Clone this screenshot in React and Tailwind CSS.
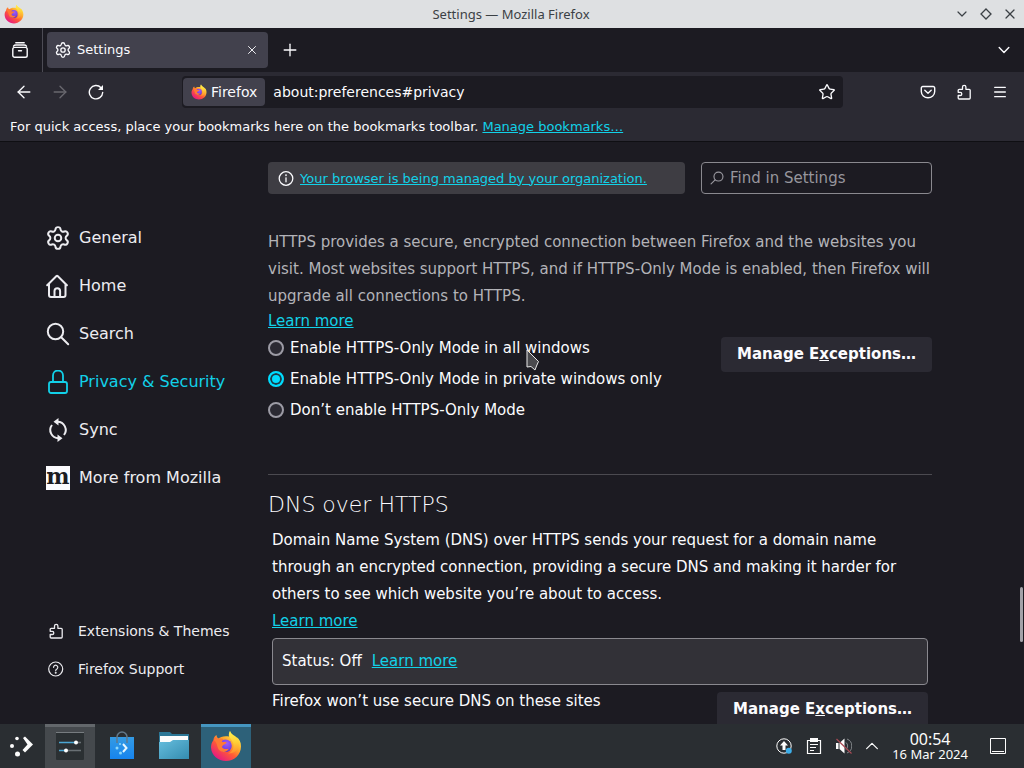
// App.jsx
import React, { useState } from "react";
import {
  ArrowLeft,
  ArrowRight,
  ChevronDown,
  ChevronUp,
  Menu,
  Plus,
  Settings,
  Star,
  X,
} from "lucide-react";

function FirefoxLogo({ id, className }) {
  return (
    <svg viewBox="0 0 32 32" className={className} aria-hidden="true">
      <defs>
        <linearGradient id={`${id}-body`} x1="0.85" y1="0.1" x2="0.2" y2="0.95">
          <stop offset="0" stopColor="#fff44f" />
          <stop offset="0.35" stopColor="#ffa72b" />
          <stop offset="0.6" stopColor="#ff5a36" />
          <stop offset="1" stopColor="#e31587" />
        </linearGradient>
        <linearGradient id={`${id}-tail`} x1="0.5" y1="0" x2="0.5" y2="1">
          <stop offset="0" stopColor="#fff44f" />
          <stop offset="0.5" stopColor="#ffcf36" />
          <stop offset="1" stopColor="#ff8a30" />
        </linearGradient>
        <radialGradient id={`${id}-globe`} cx="0.6" cy="0.3" r="0.8">
          <stop offset="0" stopColor="#a05cf5" />
          <stop offset="0.6" stopColor="#7542e5" />
          <stop offset="1" stopColor="#4a2fb0" />
        </radialGradient>
      </defs>
      <path
        fill={`url(#${id}-body)`}
        d="M20 1c-1 2-1.500 3.500-1 5.500C14 5.500 10 7 8.500 8.500 7 7.500 6.500 6 6.500 5 4.500 6 3.500 8 3.500 10 1.500 12.500 1 15 1 17.500 1.500 25.500 8 31 16 31s15-6 15-14.500c0-4-1.500-7.500-4.500-9.500.5 1 .8 2 .8 3C25 6 21 5 20 1z"
      />
      <circle cx="15.500" cy="15.800" r="6.300" fill={`url(#${id}-globe)`} />
      <path
        fill={`url(#${id}-tail)`}
        d="M20 1c-1.200 2.500-1.200 5 .5 7.500 2 2.800 3.500 5 3 8.500-.4 3-2.500 5.500-5.500 6.500 6 .5 10.500-3.500 11-9C29.300 9 26.500 7 24 5.500 22 4.300 20.500 3 20 1z"
      />
      <path
        fill="#ff7a35"
        d="M3.500 10c1.800-1.500 4-1.800 6-1 1.500-.4 3-.2 3.800.2-1 .8-1.500 1.800-1.300 2.800h4.500c-.3 1.800-2 2.300-3.200 3-.8.500-.8 1.500-1.500 2 2 2.500 5 2.500 7 1.500-1.500 3.500-6 4.500-9 2C6.500 18 8 12.500 3.500 10z"
      />
    </svg>
  );
}

function PuzzleIcon({ className }) {
  return (
    <svg viewBox="0 0 16 16" fill="none" stroke="currentColor" strokeWidth="1.3" strokeLinejoin="round" className={className} aria-hidden="true">
      <path d="M2.200 6.300a1 1 0 0 1 1-1H6.500V3a1.700 1.700 0 0 1 3.400 0v2.300h3.300a1 1 0 0 1 1 1V14a1 1 0 0 1-1 1h-10a1 1 0 0 1-1-1v-2.500h2a1.600 1.600 0 0 0 0-3.200h-2z" />
    </svg>
  );
}

function HomeIcon({ className }) {
  return (
    <svg viewBox="0 0 24 24" fill="none" stroke="currentColor" strokeWidth="2" strokeLinecap="round" strokeLinejoin="round" className={className} aria-hidden="true">
      <path d="M1.200 11.200 10.500 2a.8.8 0 0 1 1.100 0l9.300 9.200M3 9.800V21a2 2 0 0 0 2 2h12.500a2 2 0 0 0 2-2V9.800" />
      <path d="M8.500 22.500V17a2.800 2.800 0 0 1 5.600 0v5.500" />
    </svg>
  );
}

function SearchIcon({ className }) {
  return (
    <svg viewBox="0 0 24 24" fill="none" stroke="currentColor" strokeWidth="2" strokeLinecap="round" className={className} aria-hidden="true">
      <circle cx="9.500" cy="9.500" r="7.700" />
      <path d="m15.200 15.200 7 7" />
    </svg>
  );
}

function LockIcon({ className }) {
  return (
    <svg viewBox="0 0 24 24" fill="none" stroke="currentColor" strokeWidth="1.800" className={className} aria-hidden="true">
      <rect x="3" y="12" width="18" height="11" rx="2" />
      <path d="M7 12V5.500a5 5 0 0 1 10 0V12" />
    </svg>
  );
}

function SyncIcon({ className }) {
  return (
    <svg viewBox="0 0 24 24" fill="none" stroke="currentColor" strokeWidth="2" className={className} aria-hidden="true">
      <path d="M11.500 3.800a8.200 8.200 0 0 1 6.500 13.200M12.500 20.200A8.200 8.200 0 0 1 6 7" />
      <path fill="currentColor" stroke="none" d="M12.500 0v7.600L7.500 3.800zM11.500 24v-7.600l5 3.800z" />
    </svg>
  );
}

function MozillaIcon() {
  return (
    <span className="flex size-6 shrink-0 items-center justify-center bg-[#fbfbfe] pb-1 font-['DejaVu_Serif',serif] text-[22px] leading-6 font-bold text-[#1c1b22]">
      m
    </span>
  );
}

function HelpIcon({ className }) {
  return (
    <svg viewBox="0 0 16 16" fill="none" stroke="currentColor" strokeWidth="1.200" strokeLinecap="round" className={className} aria-hidden="true">
      <circle cx="7.700" cy="8" r="7" />
      <path d="M5.600 6.300a2.100 2.100 0 1 1 3.300 1.700C8 8.500 7.700 8.900 7.700 9.700" />
      <circle cx="7.700" cy="11.700" r=".4" fill="currentColor" />
    </svg>
  );
}

function InfoIcon({ className }) {
  return (
    <svg viewBox="0 0 16 16" fill="none" stroke="currentColor" strokeWidth="1.300" strokeLinecap="round" className={className} aria-hidden="true">
      <circle cx="8" cy="8.500" r="6.800" />
      <path d="M8 7.800v4" />
      <circle cx="8" cy="5.300" r=".3" fill="currentColor" />
    </svg>
  );
}

function ViewIcon({ className }) {
  return (
    <svg viewBox="0 0 16 16" fill="none" stroke="currentColor" strokeWidth="1.400" strokeLinecap="round" className={className} aria-hidden="true">
      <path d="M1.500 4.200A3 3 0 0 1 4 3h8a3 3 0 0 1 2.500 1.200M3.800.8h8.400" />
      <rect x=".8" y="5.400" width="14.400" height="9.800" rx="1.800" />
      <path d="M6.500 8.800h3" />
    </svg>
  );
}

function PocketIcon({ className }) {
  return (
    <svg viewBox="0 0 16 16" fill="none" stroke="currentColor" strokeWidth="1.400" strokeLinecap="round" strokeLinejoin="round" className={className} aria-hidden="true">
      <path d="M2.800 2.500h10.400a1.500 1.500 0 0 1 1.500 1.500v3.600a6.700 6.200 0 0 1-13.400 0V4a1.500 1.500 0 0 1 1.500-1.500z" />
      <path d="m4.800 6.300 3.200 3 3.200-3" />
    </svg>
  );
}

function ReloadIcon({ className }) {
  return (
    <svg viewBox="0 0 16 16" fill="none" stroke="currentColor" strokeWidth="1.400" strokeLinecap="round" className={className} aria-hidden="true">
      <path d="M13 3.700A6.700 6.700 0 1 0 14.700 8.500" />
      <path d="M15 1v5h-5z" fill="currentColor" stroke="none" />
    </svg>
  );
}

function TextLink({ children, className = "" }) {
  return (
    <a href="#privacy" className={`text-[#12d1e8] underline ${className}`}>
      {children}
    </a>
  );
}

function TitleBar() {
  return (
    <header className="flex h-7 shrink-0 items-center bg-[#dee0e2] px-1 font-['Noto_Sans',sans-serif] text-[13px] text-[#3b4045]">
      <div className="flex-1">
        <FirefoxLogo id="title" className="size-5" />
      </div>
      <h1 className="pt-px">Settings — Mozilla Firefox</h1>
      <div className="flex flex-1 justify-end gap-2 pr-0.5">
        <button aria-label="Minimize">
          <ChevronDown className="size-4" strokeWidth={1.8} />
        </button>
        <button aria-label="Maximize">
          <svg viewBox="0 0 16 16" fill="none" stroke="currentColor" strokeWidth="1.300" className="size-4">
            <path d="m8 3 5 5-5 5-5-5z" />
          </svg>
        </button>
        <button aria-label="Close">
          <X className="size-4" strokeWidth={1.8} />
        </button>
      </div>
    </header>
  );
}

function TabStrip() {
  return (
    <div className="flex h-11 shrink-0 items-center bg-[#1c1b22] text-[13px]">
      <button aria-label="View" className="flex h-full w-[43px] items-center justify-center border-r border-[#4d4c55] pr-0.5">
        <ViewIcon className="size-4" />
      </button>
      <div className="ml-1 flex h-9 w-[221px] items-center rounded bg-[#42414d] pl-2">
        <Settings className="size-4" viewBox="1 1 22 22" strokeWidth={1.8} />
        <span className="ml-1.5 flex-1">Settings</span>
        <button aria-label="Close tab" className="mr-2">
          <X className="size-4 p-px" strokeWidth={1.6} />
        </button>
      </div>
      <button aria-label="New tab" className="ml-3">
        <Plus className="size-5" strokeWidth={1.6} />
      </button>
      <button aria-label="List all tabs" className="mr-3 ml-auto">
        <ChevronDown className="size-4" viewBox="2 2 20 20" strokeWidth={1.8} />
      </button>
    </div>
  );
}

function NavBar() {
  return (
    <div className="flex h-10 shrink-0 items-center bg-[#2b2a33] pr-4 pl-3.5 text-[14px]">
      <button aria-label="Back">
        <ArrowLeft className="size-5" strokeWidth={1.6} />
      </button>
      <button aria-label="Forward" disabled className="ml-4 text-[#69686f]">
        <ArrowRight className="size-5" strokeWidth={1.6} />
      </button>
      <button aria-label="Reload" className="ml-[18px]">
        <ReloadIcon className="size-4" />
      </button>
      <div className="mr-[77px] ml-[78px] flex h-8 flex-1 items-center rounded bg-[#1c1b22] pr-2">
        <button className="ml-px flex h-7 items-center gap-1 rounded-sm bg-[#42414d] px-2">
          <FirefoxLogo id="identity" className="size-4" />
          Firefox
        </button>
        <input
          aria-label="Address"
          defaultValue="about:preferences#privacy"
          className="ml-2 min-w-0 flex-1 bg-transparent outline-none"
        />
        <button aria-label="Bookmark this page">
          <Star className="size-4" viewBox="1 1 22 22" strokeWidth={1.8} />
        </button>
      </div>
      <div className="flex items-center gap-5">
        <button aria-label="Save to Pocket">
          <PocketIcon className="size-4" />
        </button>
        <button aria-label="Extensions">
          <PuzzleIcon className="size-4" />
        </button>
        <button aria-label="Open application menu">
          <Menu className="size-4" strokeWidth={2} />
        </button>
      </div>
    </div>
  );
}

function BookmarksBar() {
  return (
    <div className="flex h-[30px] shrink-0 items-center gap-1 border-b border-[#0f0f13] bg-[#2b2a33] px-2.5 text-[13px]">
      <span>For quick access, place your bookmarks here on the bookmarks toolbar.</span>
      <TextLink>Manage bookmarks…</TextLink>
    </div>
  );
}

const categories = [
  { name: "General", icon: <Settings className="size-6" viewBox="1 1 22 22" strokeWidth={1.8} /> },
  { name: "Home", icon: <HomeIcon className="size-6" /> },
  { name: "Search", icon: <SearchIcon className="size-6" /> },
  { name: "Privacy & Security", icon: <LockIcon className="size-6" />, active: true },
  { name: "Sync", icon: <SyncIcon className="size-6" /> },
  { name: "More from Mozilla", icon: <MozillaIcon /> },
];

function Sidebar() {
  return (
    <nav className="flex w-[268px] shrink-0 flex-col justify-between pt-[72px] pb-9 text-[#ececf0]">
      <ul>
        {categories.map((item) => (
          <li key={item.name}>
            <a
              href="#privacy"
              className={`flex h-12 items-center gap-[9px] pl-[46px] text-[16px] ${
                item.active ? "text-[#12d1e8]" : ""
              }`}
            >
              {item.icon}
              {item.name}
            </a>
          </li>
        ))}
      </ul>
      <ul className="text-[14px]">
        <li>
          <a href="#addons" className="flex h-[38px] items-center gap-3.5 pl-12">
            <PuzzleIcon className="size-4" />
            Extensions &amp; Themes
          </a>
        </li>
        <li>
          <a href="#support" className="flex h-[38px] items-center gap-3.5 pl-12">
            <HelpIcon className="size-4" />
            Firefox Support
          </a>
        </li>
      </ul>
    </nav>
  );
}

function ExceptionsButton() {
  return (
    <button className="h-[35px] shrink-0 rounded bg-[#2b2a33] px-4 text-[15px] font-bold">
      Manage E<span className="underline">x</span>ceptions…
    </button>
  );
}

const httpsModes = [
  { id: "all", label: "Enable HTTPS-Only Mode in all windows" },
  { id: "private", label: "Enable HTTPS-Only Mode in private windows only" },
  { id: "off", label: "Don’t enable HTTPS-Only Mode" },
];

function HttpsOnly() {
  const [mode, setMode] = useState("private");

  return (
    <section>
      <p className="leading-[27px] text-[#b3b3b8]">
        HTTPS provides a secure, encrypted connection between Firefox and the
        websites you visit. Most websites support HTTPS, and if HTTPS-Only Mode
        is enabled, then Firefox will upgrade all connections to HTTPS.
      </p>
      <TextLink>Learn more</TextLink>
      <div className="flex items-start justify-between">
        <div>
          {httpsModes.map((item) => (
            <div key={item.id} className="flex h-[31px] items-center gap-1.5 pb-px">
              <input
                type="radio"
                id={item.id}
                name="httpsMode"
                checked={mode === item.id}
                onChange={() => setMode(item.id)}
                className="size-4 appearance-none rounded-full border-2 border-[#9c9ba5] bg-[#2b2a33] checked:border-[#00ddff] checked:bg-[#00ddff] checked:shadow-[inset_0_0_0_2px_#1c3b47]"
              />
              <label htmlFor={item.id}>{item.label}</label>
            </div>
          ))}
        </div>
        <div className="pt-1">
          <ExceptionsButton />
        </div>
      </div>
    </section>
  );
}

function DnsOverHttps() {
  return (
    <section className="mt-12 border-t border-[#4b4a50] pt-4">
      <h2 className="text-[22px] leading-7 font-extralight">DNS over HTTPS</h2>
      <div className="mt-2 px-1">
        <p className="leading-[27px]">
          Domain Name System (DNS) over HTTPS sends your request for a domain
          name through an encrypted connection, providing a secure DNS and
          making it harder for others to see which website you’re about to
          access.
        </p>
        <TextLink className="leading-[27px]">Learn more</TextLink>
        <div className="mt-[3px] flex h-[47px] items-center gap-2.5 rounded border border-[#8a898f] bg-[#323137] px-[9px]">
          <span>Status: Off</span>
          <TextLink>Learn more</TextLink>
        </div>
        <div className="flex items-start justify-between">
          <span className="pt-[5px]">Firefox won’t use secure DNS on these sites</span>
          <div className="pt-[7px]">
            <ExceptionsButton />
          </div>
        </div>
      </div>
    </section>
  );
}

function Preferences() {
  return (
    <div className="relative flex min-h-0 flex-1 overflow-hidden bg-[#1c1b22]">
      <Sidebar />
      <main className="max-w-[664px] flex-1 pt-5 text-[15px] leading-[23px]">
        <div className="mb-[35px] flex gap-4">
          <div className="flex h-8 flex-1 items-center gap-1.5 rounded bg-[#3e3d43] px-2.5 text-[13px]">
            <InfoIcon className="size-4" />
            <TextLink>Your browser is being managed by your organization.</TextLink>
          </div>
          <div className="flex h-8 w-[231px] items-center gap-1.5 rounded border border-[#8a898f] px-2 text-[#97969d]">
            <SearchIcon className="size-3.5 -scale-x-100" />
            <input
              type="search"
              aria-label="Find in Settings"
              placeholder="Find in Settings"
              className="min-w-0 flex-1 bg-transparent outline-none placeholder:text-[#97969d]"
            />
          </div>
        </div>
        <HttpsOnly />
        <DnsOverHttps />
      </main>
      <div className="absolute top-[445px] right-px h-[55px] w-[3px] rounded-sm bg-[#a3a2a8]" />
      <svg viewBox="0 0 14 22" className="absolute top-[207px] left-[526px] h-[22px] w-3.5" aria-hidden="true">
        <path d="M1 1v17l4-.5 4 3.500 1.500-4 2-4.500z" fill="#4a4a4e" stroke="#e8e8e8" strokeWidth="1" />
      </svg>
    </div>
  );
}

function LauncherIcon() {
  return (
    <svg viewBox="0 0 26 26" fill="#fcfcfc" className="size-[26px]" aria-hidden="true">
      <circle cx="4" cy="13" r="2" />
      <circle cx="9" cy="5.500" r="1.800" />
      <circle cx="9.500" cy="21" r="2.500" />
      <path d="m15 5 2-1.500 8 8-8 8-2.500-2.500 5-5.500z" />
    </svg>
  );
}

function SlidersIcon() {
  return (
    <svg viewBox="0 0 28 28" className="size-7" aria-hidden="true">
      <rect width="28" height="28" rx="1" fill="#2b3033" />
      <path d="M0 .5h28" stroke="#777c80" />
      <path d="M3 10.500h17M3 18.500h7" stroke="#4ba6d3" strokeWidth="1.500" />
      <path d="M20 10.500h5M10 18.500h15" stroke="#697074" strokeWidth="1.500" />
      <circle cx="20" cy="10.500" r="2" fill="#fff" />
      <circle cx="10" cy="18.500" r="2" fill="#fff" />
    </svg>
  );
}

function DiscoverIcon() {
  return (
    <svg viewBox="0 0 28 30" className="h-[30px] w-7" aria-hidden="true">
      <defs>
        <linearGradient id="bag" x1="0" y1="0" x2="0" y2="1">
          <stop offset="0" stopColor="#349be4" />
          <stop offset="1" stopColor="#1684ee" />
        </linearGradient>
      </defs>
      <path d="M2 6h24v22H2z" fill="url(#bag)" />
      <path d="M9 12V6a5 5 0 0 1 10 0v6" fill="none" stroke="#62798a" strokeWidth="1.500" />
      <path d="m15 13 3.500 4-3.500 4" fill="none" stroke="#e5f6ff" strokeWidth="2" />
      <circle cx="9" cy="17" r="1.500" fill="#8bd7fa" />
      <circle cx="12" cy="13" r="1" fill="#8bd7fa" />
      <circle cx="12.500" cy="22" r="1.500" fill="#8bd7fa" />
    </svg>
  );
}

function FolderIcon() {
  return (
    <svg viewBox="0 0 30 28" className="h-7 w-[30px]" aria-hidden="true">
      <defs>
        <linearGradient id="folder" x1="0" y1="0" x2="1" y2="1">
          <stop offset="0" stopColor="#66bddd" />
          <stop offset="1" stopColor="#348caf" />
        </linearGradient>
      </defs>
      <path d="M0 1h11l2 2h17v20H0z" fill="#2c7796" />
      <path d="M1 5h28v6H1z" fill="#fcfcfc" />
      <path d="M0 11h11l3-2h16v19H0z" fill="url(#folder)" />
    </svg>
  );
}

function Taskbar() {
  return (
    <footer className="flex h-11 shrink-0 items-center bg-[#2a2e32] font-['Noto_Sans',sans-serif] text-[#fcfcfc]">
      <button aria-label="Application launcher" className="mr-[11px] ml-2">
        <LauncherIcon />
      </button>
      <div className="flex h-full gap-0.5">
        <button aria-label="System Settings" className="flex w-[50px] items-center justify-center border-t-3 border-[#63676b] bg-[#45494d] pb-1">
          <SlidersIcon />
        </button>
        <button aria-label="Discover" className="flex w-[50px] items-center justify-center">
          <DiscoverIcon />
        </button>
        <button aria-label="Dolphin" className="flex w-[50px] items-center justify-center pb-0.5">
          <FolderIcon />
        </button>
        <button aria-label="Firefox" className="flex w-[50px] items-center justify-center border-t-3 border-[#4596c0] bg-[#2d6179] pb-1">
          <FirefoxLogo id="task" className="size-8" />
        </button>
      </div>
      <div className="ml-auto flex items-center gap-3.5">
        <button aria-label="Updates">
          <svg viewBox="0 0 16 16" className="size-4">
            <circle cx="8" cy="8" r="7.200" fill="none" stroke="#fcfcfc" />
            <path d="M8 3 4 7.500h2.500V12h3V7.500H12z" fill="#fcfcfc" />
            <circle cx="12.800" cy="12.800" r="3" fill="#3daee9" />
          </svg>
        </button>
        <button aria-label="Clipboard">
          <svg viewBox="0 0 16 16" fill="none" stroke="#fcfcfc" className="size-4">
            <path d="M1.500 2.500h13v13h-13z" strokeWidth="1.200" />
            <path d="M4 0h8v4H4z" fill="#fcfcfc" stroke="none" />
            <path d="M4 6.500h8M4 9.500h6M4 12.500h4" />
          </svg>
        </button>
        <button aria-label="Audio muted">
          <svg viewBox="0 0 16 16" fill="none" className="size-4">
            <path d="M0 5h2.500v6H0zM3.500 5 8.500.5v15l-5-4.500z" fill="#fcfcfc" />
            <path d="M10 4.500a4.500 4.500 0 0 1 0 7M11 1a7.500 7.500 0 0 1 0 14" stroke="#85898c" />
            <path d="m.5 1 15 14.500" stroke="#a84a54" strokeWidth="1.200" />
          </svg>
        </button>
        <button aria-label="Show hidden icons" className="-ml-0.5">
          <ChevronUp className="size-4" viewBox="3 3 18 18" strokeWidth={1.4} />
        </button>
      </div>
      <div className="ml-3 flex flex-col items-center">
        <time className="text-[16px] leading-4">00:54</time>
        <time className="text-[13px] leading-[14px]">16 Mar 2024</time>
      </div>
      <button aria-label="Show desktop" className="mr-[18px] ml-[22px]">
        <svg viewBox="0 0 16 16" fill="none" stroke="#fcfcfc" className="size-4">
          <path d="M.5.5h15v15H.5zM2 13.500h12" />
        </svg>
      </button>
    </footer>
  );
}

export default function App() {
  return (
    <div className="flex h-screen flex-col overflow-hidden bg-[#1c1b22] font-['DejaVu_Sans',sans-serif] text-[#fbfbfe]">
      <TitleBar />
      <TabStrip />
      <NavBar />
      <BookmarksBar />
      <Preferences />
      <Taskbar />
    </div>
  );
}
